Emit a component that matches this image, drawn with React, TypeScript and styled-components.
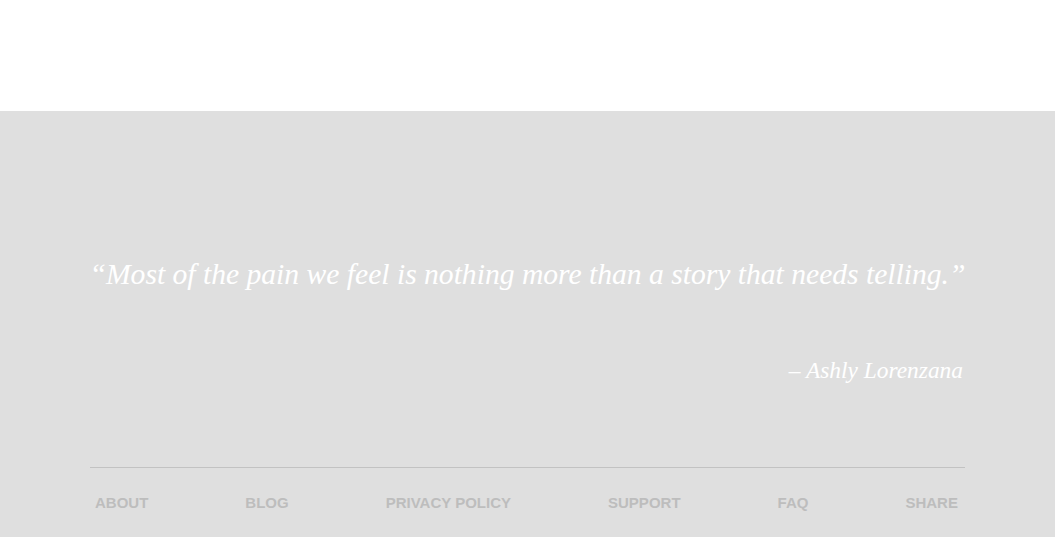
import React from 'react';
import styled, { createGlobalStyle } from 'styled-components';

const GlobalStyle = createGlobalStyle`
  html, body {
    margin: 0;
    padding: 0;
    background: #ffffff;
  }
`;

const TopSpace = styled.div`
  height: 111px;
  background: #ffffff;
`;

const Footer = styled.footer`
  background: #dfdfdf;
  padding: 143px 0 40px;
`;

const Inner = styled.div`
  width: 875px;
  margin: 0 auto;
`;

const Quote = styled.blockquote`
  margin: 0 -4px;
  text-align: center;
  font-family: "Liberation Serif", "DejaVu Serif", serif;
  font-style: italic;
  font-size: 29.6px;
  line-height: 40px;
  color: #ffffff;
  white-space: nowrap;
`;

const Author = styled.p`
  margin: 61px 2px 0 0;
  text-align: right;
  font-family: "Liberation Serif", "DejaVu Serif", serif;
  font-style: italic;
  font-size: 23.4px;
  line-height: 30px;
  color: #ffffff;
`;

const Divider = styled.hr`
  border: 0;
  border-top: 1px solid #c2c2c2;
  margin: 82px 0 0;
`;

const Nav = styled.nav`
  display: flex;
  justify-content: space-between;
  padding: 26px 7px 0 5px;
`;

const NavLink = styled.a`
  font-family: "Liberation Sans", Arial, sans-serif;
  font-weight: 700;
  font-size: 15px;
  line-height: 18px;
  color: #bdbdbd;
  text-decoration: none;
  text-transform: uppercase;
`;

const links = ['About', 'Blog', 'Privacy Policy', 'Support', 'FAQ', 'Share'];

const App = () => {
  return (
    <>
      <GlobalStyle />
      <TopSpace />
      <Footer>
        <Inner>
          <Quote>“Most of the pain we feel is nothing more than a story that needs telling.”</Quote>
          <Author>– Ashly Lorenzana</Author>
          <Divider />
          <Nav>
            {links.map((l) => (
              <NavLink key={l} href="#">{l}</NavLink>
            ))}
          </Nav>
        </Inner>
      </Footer>
    </>
  );
};

export default App;
